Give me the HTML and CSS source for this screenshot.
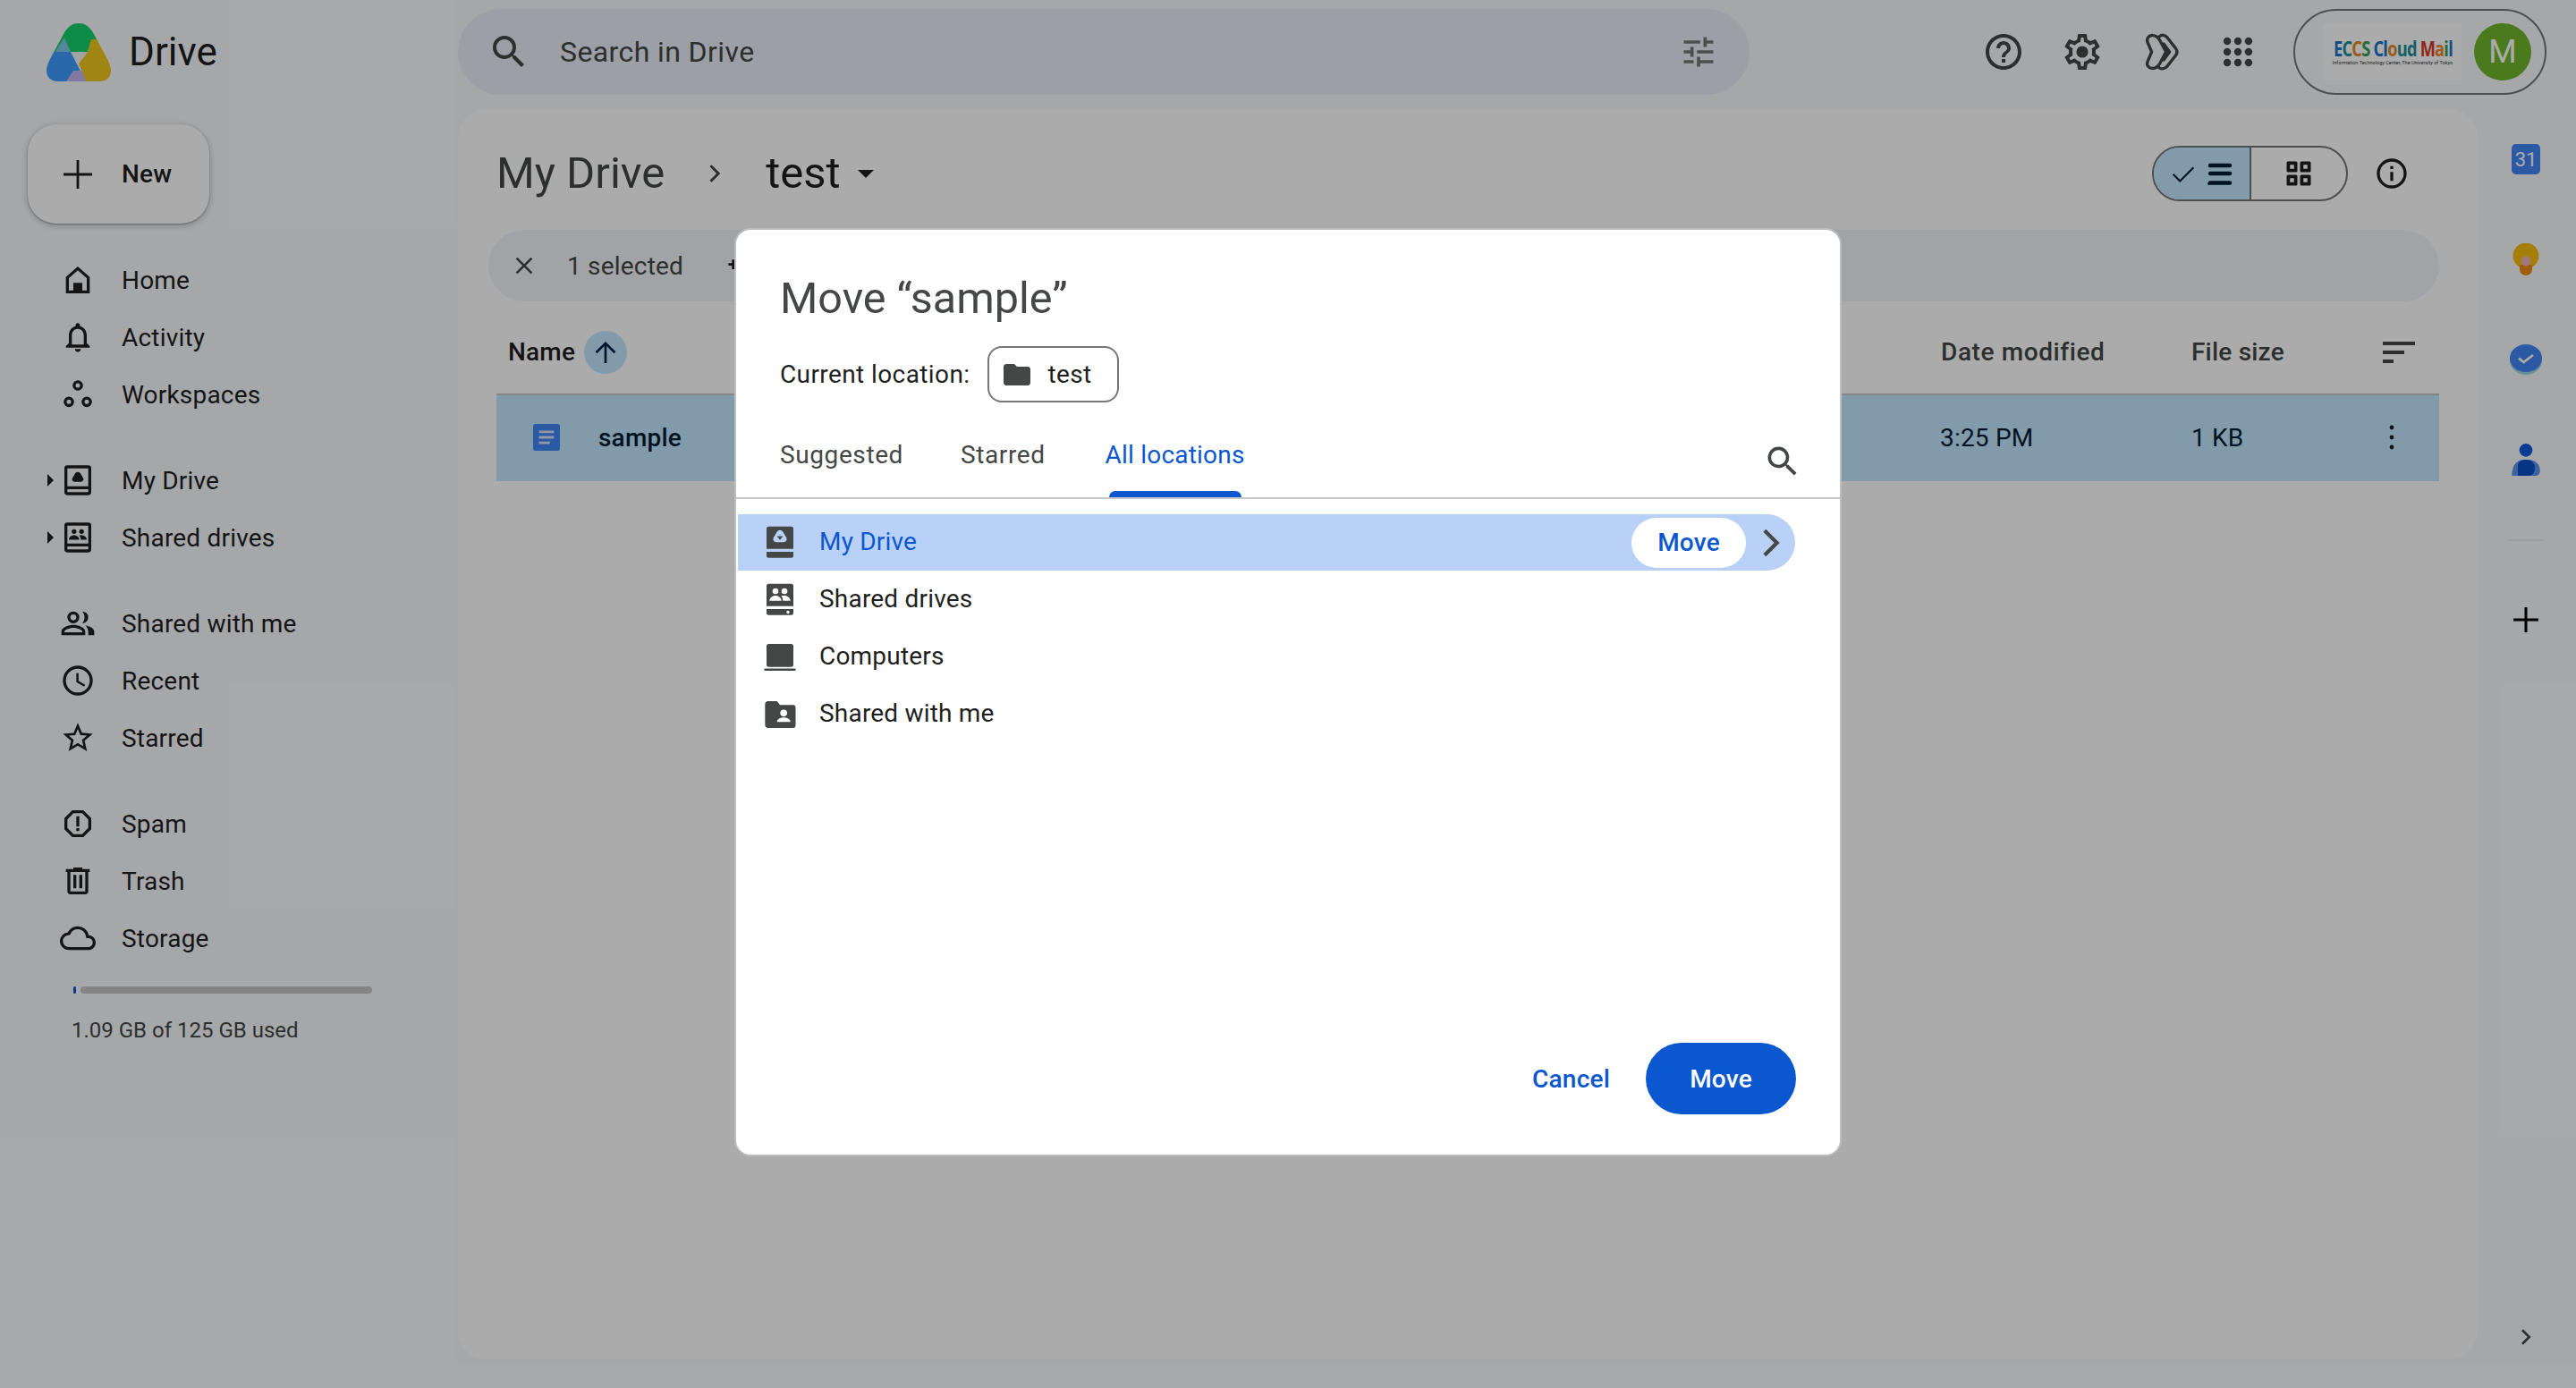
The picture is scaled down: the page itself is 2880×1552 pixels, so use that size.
FILE: index.html
```html
<!DOCTYPE html>
<html lang="en">
<head>
    <meta charset="UTF-8">
    <title>test - Google Drive</title>
    <link rel="stylesheet" href="styles.css">
</head>
<body>
    <!-- Top bar -->
    <header class="topbar">
        <div class="brand">
            <svg class="brand-logo" viewBox="0 0 72 65">
                <clipPath id="logo-clip"><path d="M36 0C46 0 51 8 54 14L68 40C71 46 72 50 72 53 72 60 67 65 60 65L12 65C5 65 0 60 0 53 0 50 1 46 4 40L18 14C21 8 26 0 36 0z"/></clipPath>
                <g clip-path="url(#logo-clip)">
                    <path fill="#16d06a" d="M0 0h72v20H50L46 32H0z"/>
                    <path fill="#80c8e8" d="M27 32H10L20 16z"/>
                    <path fill="#3c9bff" d="M0 32h27l17 33H0z"/>
                    <path fill="#eec61a" d="M50 18h22v47H44L36 45l10-13z"/>
                    <path fill="#c4b4f0" d="M22 65l8-12 10 0 4 12z"/>
                    <path fill="#f4f4f4" d="M27 32h19l-10 13z"/>
                </g>
            </svg>
            <span class="brand-name">Drive</span>
        </div>
        <div class="search">
            <svg class="search-icon" viewBox="0 0 24 24"><path d="M15.5 14h-.79l-.28-.27A6.471 6.471 0 0 0 16 9.5 6.5 6.5 0 1 0 9.5 16c1.61 0 3.09-.59 4.23-1.57l.27.28v.79l5 4.99L20.49 19l-4.99-5zm-6 0C7.01 14 5 11.99 5 9.5S7.01 5 9.5 5 14 7.01 14 9.5 11.99 14 9.5 14z"/></svg>
            <span class="search-text">Search in Drive</span>
            <svg class="search-filter" viewBox="0 0 24 24"><path d="M3 17v2h6v-2H3zM3 5v2h10V5H3zm10 16v-2h8v-2h-8v-2h-2v6h2zM7 9v2H3v2h4v2h2V9H7zm14 4v-2H11v2h10zm-6-4h2V7h4V5h-4V3h-2v6z"/></svg>
        </div>
        <div class="top-actions">
            <svg class="top-icon" viewBox="0 0 24 24"><path d="M11 18h2v-2h-2v2zm1-16C6.48 2 2 6.48 2 12s4.48 10 10 10 10-4.48 10-10S17.52 2 12 2zm0 18c-4.41 0-8-3.59-8-8s3.59-8 8-8 8 3.59 8 8-3.59 8-8 8zm0-14c-2.21 0-4 1.79-4 4h2c0-1.1.9-2 2-2s2 .9 2 2c0 2-3 1.75-3 5h2c0-2.25 3-2.5 3-5 0-2.21-1.79-4-4-4z"/></svg>
            <svg class="top-icon" viewBox="0 0 24 24"><path d="M19.43 12.98c.04-.32.07-.64.07-.98 0-.34-.03-.66-.07-.98l2.11-1.65c.19-.15.24-.42.12-.64l-2-3.46c-.09-.16-.26-.25-.44-.25-.06 0-.12.01-.17.03l-2.49 1c-.52-.4-1.08-.73-1.69-.98l-.38-2.65C14.46 2.18 14.25 2 14 2h-4c-.25 0-.46.18-.49.42l-.38 2.65c-.61.25-1.17.59-1.69.98l-2.49-1c-.06-.02-.12-.03-.18-.03-.17 0-.34.09-.43.25l-2 3.46c-.13.22-.07.49.12.64l2.11 1.65c-.04.32-.07.65-.07.98 0 .33.03.66.07.98l-2.11 1.65c-.19.15-.24.42-.12.64l2 3.46c.09.16.26.25.44.25.06 0 .12-.01.17-.03l2.49-1c.52.4 1.08.73 1.69.98l.38 2.65c.03.24.24.42.49.42h4c.25 0 .46-.18.49-.42l.38-2.65c.61-.25 1.17-.59 1.69-.98l2.49 1c.06.02.12.03.18.03.17 0 .34-.09.43-.25l2-3.46c.12-.22.07-.49-.12-.64l-2.11-1.65zm-1.98-1.71c.04.31.05.52.05.73 0 .21-.02.43-.05.73l-.14 1.13.89.7 1.08.84-.7 1.21-1.27-.51-1.04-.42-.9.68c-.43.32-.84.56-1.25.73l-1.06.43-.16 1.13-.2 1.35h-1.4l-.19-1.35-.16-1.13-1.06-.43c-.43-.18-.83-.41-1.23-.71l-.91-.7-1.06.43-1.27.51-.7-1.21 1.08-.84.89-.7-.14-1.13c-.03-.31-.05-.54-.05-.74s.02-.43.05-.73l.14-1.13-.89-.7-1.08-.84.7-1.21 1.27.51 1.04.42.9-.68c.43-.32.84-.56 1.25-.73l1.06-.43.16-1.13.2-1.35h1.39l.19 1.35.16 1.13 1.06.43c.43.18.83.41 1.23.71l.91.7 1.06-.43 1.27-.51.7 1.21-1.07.85-.89.7.14 1.13z"/><circle cx="12" cy="12" r="3.3"/></svg>
            <svg class="top-icon" viewBox="0 0 24 24"><path fill="none" stroke="#444746" stroke-width="1.7" stroke-linejoin="round" stroke-linecap="round" d="M11 3.500c1.800-1.500 3.400-.8 4.600.6l4.600 5.900c.9 1.200.9 2.800 0 4l-4.600 5.900c-1.300 1.500-3.300 2.100-5 .7M7.500 2.800c-2.300-.2-3.800 1.800-3 3.800l2.300 5.400-2.300 5.400c-.8 2 .7 4 3 3.800 2 0 3.100-1.500 3.900-2.800l3.400-6.400-3.400-6.400C10.600 4.300 9.500 2.800 7.500 2.800zM13.500 7.500l3.300 4.500-3.300 4.500"/></svg>
            <svg class="top-icon top-icon-sm" viewBox="0 0 24 24"><circle cx="5.500" cy="5.500" r="2.300"/><circle cx="12" cy="5.500" r="2.300"/><circle cx="18.500" cy="5.500" r="2.300"/><circle cx="5.500" cy="12" r="2.300"/><circle cx="12" cy="12" r="2.300"/><circle cx="18.500" cy="12" r="2.300"/><circle cx="5.500" cy="18.500" r="2.300"/><circle cx="12" cy="18.500" r="2.300"/><circle cx="18.500" cy="18.500" r="2.300"/></svg>
        </div>
        <div class="account">
            <div class="org-logo">
                <div class="org-name"><span class="c-blue">E</span><span class="c-teal">C</span><span class="c-orange">C</span><span class="c-green">S</span> <span class="c-blue">Cl</span><span class="c-orange">o</span><span class="c-teal">ud</span> <span class="c-red">M</span><span class="c-orange">a</span><span class="c-green">i</span><span class="c-blue">l</span></div>
                <div class="org-sub">Information Technology Center, The University of Tokyo</div>
            </div>
            <div class="avatar">M</div>
        </div>
    </header>

    <div class="content">
        <!-- Left navigation -->
        <nav class="sidebar">
            <button class="new-btn">
                <svg class="new-plus" viewBox="0 0 24 24"><path d="M20 12.700h-7.300V20h-1.400v-7.300H4v-1.400h7.300V4h1.400v7.300H20z"/></svg>
                New
            </button>
            <div class="nav-group">
                <div class="nav-item"><i></i><svg viewBox="0 0 24 24"><path d="M12 3L4 10v11h16V10zM6 19v-8.200l6-5.300 6 5.300V19h-3v-5H9v5z"/></svg>Home</div>
                <div class="nav-item"><i></i><svg viewBox="0 0 24 24"><path d="M18 16v-5c0-3-1.600-5.600-4.500-6.300V4a1.500 1.500 0 0 0-3 0v.7C7.600 5.400 6 8 6 11v5l-2 2v1h16v-1zm-2 1H8v-6c0-2.500 1.500-4.500 4-4.500s4 2 4 4.500zM12 22c1.100 0 2-.9 2-2h-4c0 1.100.9 2 2 2z"/></svg>Activity</div>
                <div class="nav-item"><i></i><svg viewBox="0 0 24 24"><path fill-rule="evenodd" d="M12 2.500a3.500 3.500 0 1 0 0 7 3.500 3.500 0 0 0 0-7zm0 2a1.500 1.500 0 1 1 0 3 1.500 1.500 0 0 1 0-3zM6 13.500a3.500 3.500 0 1 0 0 7 3.500 3.500 0 0 0 0-7zm0 2a1.500 1.500 0 1 1 0 3 1.500 1.500 0 0 1 0-3zM18 13.500a3.500 3.500 0 1 0 0 7 3.500 3.500 0 0 0 0-7zm0 2a1.500 1.500 0 1 1 0 3 1.500 1.500 0 0 1 0-3z"/></svg>Workspaces</div>
            </div>
            <div class="nav-group">
                <div class="nav-item"><i class="caret"></i><svg viewBox="0 0 24 24"><path fill-rule="evenodd" d="M5 2h14a2 2 0 0 1 2 2v16a2 2 0 0 1-2 2H5a2 2 0 0 1-2-2V4a2 2 0 0 1 2-2zm0 2v12h14V4zm0 14v2h14v-2z"/><path d="M12 6.500c1 0 1.600.6 2 1.300l1.600 2.700c.6 1.200-.1 2.500-1.500 2.500H9.900c-1.400 0-2.100-1.300-1.500-2.500L10 7.800c.4-.7 1-1.300 2-1.300z"/></svg>My Drive</div>
                <div class="nav-item"><i class="caret"></i><svg viewBox="0 0 24 24"><path fill-rule="evenodd" d="M5 2h14a2 2 0 0 1 2 2v16a2 2 0 0 1-2 2H5a2 2 0 0 1-2-2V4a2 2 0 0 1 2-2zm0 2v12h14V4zm0 14v2h14v-2z"/><circle cx="9.500" cy="8" r="1.600"/><circle cx="14.500" cy="8" r="1.600"/><path d="M6 13.500c0-2 2-3 3.500-3s3.500 1 3.500 3zM14 13.500c0-1.200-.4-2.100-1.100-2.800.5-.2 1.100-.2 1.600-.2 1.500 0 3.500 1 3.500 3z"/></svg>Shared drives</div>
            </div>
            <div class="nav-group">
                <div class="nav-item"><i></i><svg viewBox="0 0 24 24"><path fill-rule="evenodd" d="M9 4a4 4 0 1 0 0 8 4 4 0 0 0 0-8zm0 2a2 2 0 1 1 0 4 2 2 0 0 1 0-4zM9 13c-3 0-8 1.500-8 4.500V20h16v-2.500C17 14.500 12 13 9 13zm-6 5v-.500c0-1 3-2.500 6-2.500s6 1.500 6 2.500v.500z"/><path d="M15 4a4 4 0 0 1 0 8c1-1.100 1.500-2.500 1.500-4S16 5.100 15 4zM17 13.300c2.600.5 6 1.800 6 4.200V20h-4v-2.500c0-1.700-.8-3.100-2-4.200z"/></svg>Shared with me</div>
                <div class="nav-item"><i></i><svg viewBox="0 0 24 24"><path d="M12 2a10 10 0 1 0 0 20 10 10 0 0 0 0-20zm0 18a8 8 0 1 1 0-16 8 8 0 0 1 0 16zM12.500 7H11v6l5.200 3.100.8-1.200-4.500-2.700z"/></svg>Recent</div>
                <div class="nav-item"><i></i><svg viewBox="0 0 24 24"><path d="M22 9.240l-7.190-.62L12 2 9.190 8.630 2 9.240l5.460 4.730L5.820 21 12 17.270 18.180 21l-1.630-7.030L22 9.240zM12 15.400l-3.760 2.270 1-4.280-3.320-2.880 4.380-.38L12 6.100l1.710 4.040 4.380.38-3.320 2.880 1 4.280L12 15.400z"/></svg>Starred</div>
            </div>
            <div class="nav-group">
                <div class="nav-item"><i></i><svg viewBox="0 0 24 24"><path d="M15.730 3H8.270L3 8.270v7.460L8.270 21h7.460L21 15.730V8.270L15.730 3zM19 14.900L14.900 19H9.100L5 14.900V9.100L9.100 5h5.800L19 9.100v5.800zM11 7h2v7h-2zm0 8h2v2h-2z"/></svg>Spam</div>
                <div class="nav-item"><i></i><svg viewBox="0 0 24 24"><path d="M15 4V3H9v1H4v2h1v13c0 1.100.9 2 2 2h10c1.100 0 2-.9 2-2V6h1V4h-5zm2 15H7V6h10v13zM9 8h2v9H9zm4 0h2v9h-2z"/></svg>Trash</div>
                <div class="nav-item"><i></i><svg viewBox="0 0 24 24"><path d="M19.350 10.040A7.490 7.490 0 0 0 12 4C9.110 4 6.600 5.640 5.350 8.040A5.994 5.994 0 0 0 0 14c0 3.310 2.690 6 6 6h13c2.760 0 5-2.240 5-5 0-2.640-2.050-4.780-4.650-4.960zM19 18H6c-2.210 0-4-1.790-4-4 0-2.050 1.530-3.760 3.560-3.970l1.070-.11.500-.95A5.469 5.469 0 0 1 12 6c2.620 0 4.880 1.860 5.390 4.430l.30 1.500 1.530.11A2.980 2.980 0 0 1 22 15c0 1.650-1.350 3-3 3z"/></svg>Storage</div>
            </div>
            <div class="storage-bar"><span class="storage-used"></span><span class="storage-free"></span></div>
            <div class="storage-text">1.09 GB of 125 GB used</div>
        </nav>

        <!-- File list -->
        <main class="panel">
            <div class="title-row">
                <span class="crumb">My Drive</span>
                <svg class="crumb-sep" viewBox="0 0 24 24"><path d="M9.700 5.500L8.300 6.900l5.100 5.100-5.100 5.100 1.400 1.400 6.500-6.500z"/></svg>
                <span class="crumb crumb-current">test</span>
                <i class="crumb-caret"></i>
                <div class="view-toggle">
                    <span class="view-opt view-on">
                        <svg viewBox="0 0 24 24"><path d="M9.500 16.600L4.900 12l-1 1 5.600 5.600L20.100 8l-1-1z"/></svg>
                        <svg viewBox="0 0 24 24"><path d="M4 5.500a1 1 0 0 1 1-1h15a1 1 0 0 1 0 3H5a1 1 0 0 1-1-1.500zM4 12a1.500 1.500 0 0 1 1-1.500h15a1.500 1.500 0 0 1 0 3H5A1.500 1.500 0 0 1 4 12zM4 18.500a1 1 0 0 1 1-1h15a1 1 0 0 1 0 3H5a1 1 0 0 1-1-2z"/></svg>
                    </span>
                    <span class="view-opt">
                        <svg viewBox="0 0 24 24"><path fill-rule="evenodd" d="M4 3h6a1 1 0 0 1 1 1v6a1 1 0 0 1-1 1H4a1 1 0 0 1-1-1V4a1 1 0 0 1 1-1zm1.500 2.500v3h3v-3zM14 3h6a1 1 0 0 1 1 1v6a1 1 0 0 1-1 1h-6a1 1 0 0 1-1-1V4a1 1 0 0 1 1-1zm1.500 2.500v3h3v-3zM4 13h6a1 1 0 0 1 1 1v6a1 1 0 0 1-1 1H4a1 1 0 0 1-1-1v-6a1 1 0 0 1 1-1zm1.500 2.500v3h3v-3zM14 13h6a1 1 0 0 1 1 1v6a1 1 0 0 1-1 1h-6a1 1 0 0 1-1-1v-6a1 1 0 0 1 1-1zm1.500 2.500v3h3v-3z"/></svg>
                    </span>
                </div>
                <svg class="info-icon" viewBox="0 0 24 24"><path d="M11 7h2v2h-2zm0 4h2v6h-2zm1-9a10 10 0 1 0 0 20 10 10 0 0 0 0-20zm0 18a8 8 0 1 1 0-16 8 8 0 0 1 0 16z"/></svg>
            </div>

            <div class="select-bar">
                <svg class="select-close" viewBox="0 0 24 24"><path d="M19 6.400L17.600 5 12 10.600 6.400 5 5 6.400 10.600 12 5 17.600 6.400 19 12 13.400 17.600 19 19 17.600 13.400 12z"/></svg>
                <span>1 selected</span>
                <svg class="select-share" viewBox="0 0 24 24"><path d="M15 12a4 4 0 1 0 0-8 4 4 0 0 0 0 8zM6 10V7H4v3H1v2h3v3h2v-3h3v-2zm9 4c-2.700 0-8 1.300-8 4v2h16v-2c0-2.700-5.300-4-8-4z"/></svg>
            </div>

            <div class="file-head">
                <div class="col-name">Name
                    <span class="sort-badge"><svg viewBox="0 0 24 24"><path d="M12.900 20h-1.800V7.400L5.700 12.800 4.400 11.500 12 4l7.600 7.500-1.300 1.300-5.400-5.400z"/></svg></span>
                </div>
                <div class="col-date">Date modified</div>
                <div>File size</div>
                <div class="col-end"><svg class="sort-icon" viewBox="0 0 24 24"><path d="M3 6h18v2H3zm0 5h12v2H3zm0 5h6v2H3z"/></svg></div>
            </div>
            <div class="file-row">
                <div class="col-file">
                    <svg class="doc-icon" viewBox="0 0 32 32"><rect x="0" y="0" width="32" height="32" rx="3" fill="#4285f4"/><path fill="#d6e4fb" d="M7 8h18v3H7zm0 6.500h18v3H7zm0 6.500h13v3H7z"/></svg>
                    sample
                </div>
                <div>3:25 PM</div>
                <div>1 KB</div>
                <div class="col-end col-more"><svg class="more-icon" viewBox="0 0 24 24"><circle cx="12" cy="6.500" r="1.200"/><circle cx="12" cy="12" r="1.200"/><circle cx="12" cy="17.500" r="1.200"/></svg></div>
            </div>
        </main>

        <!-- Side apps -->
        <aside class="rail">
            <div class="rail-app">
                <span class="cal-icon">31</span>
            </div>
            <div class="rail-app">
                <svg class="rail-svg" viewBox="0 0 30 36"><circle cx="15" cy="14" r="14.500" fill="#f5bd0c"/><path fill="#f08a0a" d="M8 24h14v5a7 7 0 0 1-14 0z"/><circle cx="15" cy="20" r="5.500" fill="#f0b4b4"/></svg>
            </div>
            <div class="rail-app">
                <svg class="rail-svg" viewBox="0 0 36 34"><ellipse cx="18" cy="18" rx="18" ry="16" fill="#9fd4e4"/><ellipse cx="18" cy="15.500" rx="18" ry="15.500" fill="#4285f4"/><path d="M10 15.500l5.500 4.500L26 12" fill="none" stroke="#fff" stroke-width="2.800"/></svg>
            </div>
            <div class="rail-app">
                <svg class="rail-svg" viewBox="0 0 28 32"><circle cx="14" cy="6.500" r="6.500" fill="#0a5ae0"/><path d="M0 32c0-9 4-16 12-16h4c8 0 12 5 12 11 0 3-2 5-5 5z" fill="#5c92ee"/><path d="M6 32V22c0-4 4-6 8-6 6 0 9 4 9 8 0 4-2 8-6 8z" fill="#0a4fc6"/></svg>
            </div>
            <div class="rail-sep"></div>
            <svg class="rail-plus" viewBox="0 0 28 28"><path d="M12.500 0h3v12.500H28v3H15.500V28h-3V15.500H0v-3h12.500z"/></svg>
            <svg class="rail-toggle" viewBox="0 0 24 24"><path d="M9.700 5.500L8.300 6.900l5.100 5.100-5.100 5.100 1.400 1.400 6.500-6.500z"/></svg>
        </aside>
    </div>

    <div class="scrim"></div>

    <!-- Move dialog -->
    <section class="dialog">
        <h2 class="dialog-title">Move “sample”</h2>
        <div class="location">
            <span>Current location:</span>
            <span class="location-chip">
                <svg viewBox="0 0 24 24"><path d="M10 4H4c-1.100 0-2 .9-2 2v12c0 1.100.9 2 2 2h16c1.100 0 2-.9 2-2V8c0-1.100-.9-2-2-2h-8z"/></svg>
                test
            </span>
        </div>
        <div class="tabs">
            <span class="tab">Suggested</span>
            <span class="tab">Starred</span>
            <span class="tab tab-active">All locations</span>
            <svg class="tabs-search" viewBox="0 0 24 24"><path d="M15.500 14h-.79l-.28-.27A6.471 6.471 0 0 0 16 9.500 6.500 6.500 0 1 0 9.500 16c1.610 0 3.090-.59 4.230-1.570l.27.28v.79l5 4.990L20.490 19l-4.990-5zm-6 0C7.010 14 5 11.990 5 9.500S7.010 5 9.500 5 14 7.010 14 9.500 11.990 14 9.500 14z"/></svg>
        </div>
        <div class="places">
            <div class="place place-on">
                <svg viewBox="0 0 24 24"><path d="M4.500 1h15A1.500 1.500 0 0 1 21 2.500V16H3V2.500A1.500 1.500 0 0 1 4.500 1zM3 18h18v2.500a1.500 1.500 0 0 1-1.500 1.500h-15A1.500 1.500 0 0 1 3 20.500z"/><path fill="#b9d1f6" d="M12 3.500c1 0 1.700.6 2.200 1.400l2 3.300c.9 1.500-.1 3.300-1.800 3.300H9.600c-1.700 0-2.700-1.800-1.800-3.300l2-3.300c.5-.8 1.200-1.400 2.200-1.400z"/><path d="M10 7.500h4L12 10z"/></svg>
                <span>My Drive</span>
                <span class="place-move">Move</span>
                <svg class="place-next" viewBox="0 0 24 24"><path d="M8.600 2.800L6.800 4.600l7.400 7.400-7.400 7.400 1.800 1.800 9.200-9.200z"/></svg>
            </div>
            <div class="place">
                <svg viewBox="0 0 24 24"><path d="M4.500 1h15A1.500 1.500 0 0 1 21 2.500V16H3V2.500A1.500 1.500 0 0 1 4.500 1zM3 18h18v2.500a1.500 1.500 0 0 1-1.500 1.500h-15A1.500 1.500 0 0 1 3 20.500zm14.800 1.200a1 1 0 1 0 0 1.800 1 1 0 0 0 0-1.800z"/><g fill="#fff"><circle cx="9" cy="6" r="2"/><circle cx="15" cy="6" r="2"/><path d="M5 12.500c0-2 2-3.500 4-3.500s4 1.500 4 3.500zM14 12.500c0-1.300-.4-2.500-1.200-3.300.6-.2 1.500-.2 2.200-.2 2 0 4 1.500 4 3.500z"/></g></svg>
                <span>Shared drives</span>
            </div>
            <div class="place">
                <svg viewBox="0 0 24 24"><path d="M4.500 3h15A1.500 1.500 0 0 1 21 4.500V17a1.500 1.500 0 0 1-1.500 1.500h-15A1.500 1.500 0 0 1 3 17V4.500A1.500 1.500 0 0 1 4.500 3zM1.500 19.500h21V21h-21z"/></svg>
                <span>Computers</span>
            </div>
            <div class="place">
                <svg viewBox="0 0 24 24"><path d="M10 3H4C2.900 3 2 3.900 2 5v14c0 1.100.9 2 2 2h17c1.100 0 1.500-.9 1.500-2V7.500c0-1.100-.4-2-1.500-2h-9z"/><g fill="#fff"><circle cx="14.500" cy="11" r="2.300"/><path d="M10 17c0-2 2.500-3 4.500-3s4.500 1 4.500 3z"/></g></svg>
                <span>Shared with me</span>
            </div>
        </div>
        <div class="dialog-actions">
            <button class="btn-text">Cancel</button>
            <button class="btn-fill">Move</button>
        </div>
    </section>
</body>
</html>
```

FILE: styles.css
```css
* {
    box-sizing: border-box;
}

html, body {
    height: 100%;
}

body {
    margin: 0;
    height: 1552px;
    overflow: hidden;
    position: relative;
    display: flex;
    flex-direction: column;
    background-color: #f8fafd;
    font-family: Roboto, "Noto Sans", Arial, sans-serif;
    font-size: 28px;
    letter-spacing: 0.2px;
    color: #1f1f1f;
}

svg {
    fill: currentColor;
    flex: none;
}

/* Top bar */
.topbar {
    height: 122px;
    flex: none;
    display: flex;
    align-items: flex-start;
    padding-top: 10px;
}

.brand {
    width: 512px;
    display: flex;
    align-items: center;
    height: 96px;
    padding-left: 52px;
    gap: 20px;
}

.brand-logo {
    width: 72px;
    height: 65px;
}

.brand-name {
    font-size: 44px;
    letter-spacing: 0;
    color: #1f1f1f;
}

.search {
    width: 1444px;
    height: 96px;
    border-radius: 48px;
    background-color: #e9eef6;
    display: flex;
    align-items: center;
    padding-left: 33px;
    padding-right: 35px;
    color: #444746;
}

.search-icon {
    width: 48px;
    height: 48px;
    margin-right: 33px;
}

.search-text {
    flex: 1;
    font-size: 32px;
    letter-spacing: 0.4px;
}

.search-filter {
    width: 44px;
    height: 44px;
    color: #747775;
}

.top-actions {
    display: flex;
    align-items: center;
    height: 96px;
    margin-left: 260px;
    gap: 40px;
    color: #444746;
}

.top-icon {
    width: 48px;
    height: 48px;
}

.top-icon-sm {
    width: 44px;
    height: 44px;
}

.account {
    margin-left: 40px;
    width: 283px;
    height: 96px;
    border: 2px solid #747775;
    border-radius: 48px;
    display: flex;
    align-items: center;
    padding-left: 32px;
}

.org-logo {
    width: 154px;
    height: 63px;
    background-color: #fff;
    display: flex;
    flex-direction: column;
    align-items: center;
    justify-content: center;
    line-height: 1;
}

.org-name {
    font-family: "Open Sans", sans-serif;
    font-weight: 700;
    font-size: 24px;
    letter-spacing: -1px;
    white-space: nowrap;
    transform: scaleX(0.76);
}

.org-sub {
    font-size: 5.500px;
    letter-spacing: 0;
    margin-top: 2px;
    color: #333;
    white-space: nowrap;
}

.c-blue { color: #1a73c8; }
.c-teal { color: #1a8f9c; }
.c-orange { color: #e8882a; }
.c-green { color: #3aa050; }
.c-red { color: #d63a2a; }

.avatar {
    width: 64px;
    height: 64px;
    margin-left: 14px;
    border-radius: 50%;
    background-color: #6fb62c;
    color: #fff;
    display: flex;
    align-items: center;
    justify-content: center;
    font-size: 36px;
}

.content {
    flex: 1;
    display: flex;
    min-height: 0;
}

/* Left navigation */
.sidebar {
    width: 512px;
    flex: none;
    padding-top: 17px;
}

.new-btn {
    width: 203px;
    height: 111px;
    margin-left: 31px;
    margin-bottom: 32px;
    border: none;
    border-radius: 32px;
    background-color: #fff;
    box-shadow: 0 2px 6px 2px rgba(0, 0, 0, 0.15), 0 1px 2px rgba(0, 0, 0, 0.3);
    display: flex;
    align-items: center;
    padding: 0 0 0 32px;
    gap: 25px;
    font-family: inherit;
    font-size: 28px;
    font-weight: 500;
    letter-spacing: 0.2px;
    color: #1f1f1f;
}

.new-plus {
    width: 48px;
    height: 48px;
}

.nav-group {
    margin-bottom: 32px;
}

.nav-item {
    height: 64px;
    display: grid;
    grid-template-columns: 25px 69px 1fr;
    align-items: center;
    padding-left: 42px;
    padding-bottom: 2px;
    color: #1f1f1f;
}

.nav-item svg {
    width: 40px;
    height: 40px;
    color: #1f1f1f;
}

.caret {
    width: 0;
    height: 0;
    margin-left: 11px;
    border-left: 7px solid #1f1f1f;
    border-top: 7px solid transparent;
    border-bottom: 7px solid transparent;
}

.storage-bar {
    display: flex;
    gap: 5px;
    margin-left: 82px;
    width: 334px;
    height: 8px;
    margin-top: -11px;
}

.storage-used {
    width: 3px;
    background-color: #0b57d0;
    border-radius: 2px;
}

.storage-free {
    flex: 1;
    background-color: #c7c7c7;
    border-radius: 4px;
}

.storage-text {
    margin-top: 25px;
    margin-left: 80px;
    font-size: 24px;
    line-height: 32px;
    letter-spacing: 0;
    color: #444746;
}

/* File list panel */
.panel {
    width: 2258px;
    flex: none;
    height: 1398px;
    background-color: #fff;
    border-radius: 32px;
    padding-left: 43px;
    padding-right: 43px;
}

.title-row {
    height: 135px;
    padding-top: 8px;
    display: flex;
    align-items: center;
    padding-right: 33px;
}

.crumb {
    font-size: 49px;
    letter-spacing: 0;
    color: #444746;
}

.crumb-current {
    color: #1f1f1f;
}

.crumb-sep {
    width: 36px;
    height: 36px;
    margin: 0 39px 0 38px;
    color: #444746;
}

.crumb-caret {
    margin-left: 19px;
    margin-top: 2px;
    border-top: 9px solid #1f1f1f;
    border-left: 9px solid transparent;
    border-right: 9px solid transparent;
}

.view-toggle {
    margin-left: auto;
    width: 219px;
    height: 62px;
    border: 2px solid #747775;
    border-radius: 31px;
    display: flex;
    overflow: hidden;
}

.view-opt {
    flex: 1;
    display: flex;
    align-items: center;
    justify-content: center;
    gap: 4px;
}

.view-opt svg {
    width: 36px;
    height: 36px;
    color: #1f1f1f;
}

.view-on {
    background-color: #c2e7ff;
    border-right: 2px solid #747775;
    color: #001d35;
}

.view-on svg {
    color: #001d35;
}

.info-icon {
    width: 40px;
    height: 40px;
    margin-left: 29px;
}

.select-bar {
    margin-left: -9px;
    height: 80px;
    border-radius: 40px;
    background-color: #f0f4f9;
    display: flex;
    align-items: center;
    padding-left: 24px;
    color: #1f1f1f;
}

.select-close {
    width: 32px;
    height: 32px;
    margin-right: 32px;
    color: #444746;
}

.select-bar span {
    color: #444746;
}

.select-share {
    width: 32px;
    height: 32px;
    margin-left: 49px;
}

.file-head,
.file-row {
    display: grid;
    grid-template-columns: 1614px 281px 1fr 120px;
    align-items: center;
}

.file-head {
    height: 103px;
    padding-top: 10px;
    color: #444746;
    font-weight: 500;
}

.col-date {
    letter-spacing: 0.6px;
    padding-left: 1px;
}

.col-name {
    padding-left: 13px;
    display: flex;
    align-items: center;
    gap: 10px;
    color: #1f1f1f;
}

.sort-badge {
    width: 48px;
    height: 48px;
    border-radius: 50%;
    background-color: #c2e7ff;
    display: flex;
    align-items: center;
    justify-content: center;
    color: #041e49;
}

.sort-badge svg {
    width: 36px;
    height: 36px;
}

.col-end {
    display: flex;
    justify-content: flex-end;
    padding-right: 21px;
}

.sort-icon {
    width: 48px;
    height: 48px;
    color: #444746;
}

.file-row {
    height: 98px;
    background-color: #c2e7ff;
    border-top: 2px solid #c7c7c7;
    padding-bottom: 2px;
    color: #001d35;
}

.col-file {
    display: flex;
    align-items: center;
    gap: 43px;
    padding-left: 41px;
    font-weight: 500;
}

.doc-icon {
    width: 30px;
    height: 32px;
}

.col-more {
    padding-right: 29px;
}

.more-icon {
    width: 48px;
    height: 48px;
    color: #1f1f1f;
}

/* Side apps */
.rail {
    flex: 1;
    display: flex;
    flex-direction: column;
    align-items: center;
    padding-right: 2px;
}

.rail-app {
    height: 112px;
    flex: none;
    display: flex;
    align-items: center;
    justify-content: center;
}

.cal-icon {
    width: 32px;
    height: 34px;
    border-radius: 5px;
    background-color: #4285f4;
    color: #fff;
    display: flex;
    align-items: center;
    justify-content: center;
    font-size: 22px;
    letter-spacing: 0;
}

.rail-svg {
    width: 36px;
    height: 36px;
}

.rail-sep {
    width: 40px;
    height: 2px;
    margin-top: 33px;
    background-color: #eaeaea;
}

.rail-plus {
    width: 28px;
    height: 28px;
    margin-top: 74px;
    color: #000;
}

.rail-toggle {
    width: 32px;
    height: 32px;
    margin-top: auto;
    margin-bottom: 41px;
    color: #444746;
}

/* Dialog */
.scrim {
    position: absolute;
    inset: 0;
    background-color: rgba(0, 0, 0, 0.33);
}

.dialog {
    position: absolute;
    left: 823px;
    top: 257px;
    width: 1234px;
    height: 1034px;
    background-color: #fff;
    border-radius: 16px;
    box-shadow: 0 0 0 2px #bdbdbd;
    display: flex;
    flex-direction: column;
}

.dialog-title {
    margin: 49px 0 0 49px;
    font-size: 48.500px;
    font-weight: 400;
    line-height: 56px;
    letter-spacing: 0;
    color: #444746;
}

.location {
    margin: 25px 0 0 49px;
    height: 63px;
    display: flex;
    align-items: center;
    gap: 20px;
    letter-spacing: 0.4px;
    color: #1f1f1f;
}

.location-chip {
    width: 147px;
    height: 63px;
    border: 2px solid #747775;
    border-radius: 16px;
    display: flex;
    align-items: center;
    padding-left: 13px;
    gap: 16px;
}

.location-chip svg {
    width: 36px;
    height: 36px;
    color: #444746;
}

.tabs {
    margin-top: 18px;
    height: 90px;
    border-bottom: 2px solid #c7c7c7;
    padding-left: 49px;
    padding-right: 42px;
    display: flex;
    gap: 64px;
}

.tab {
    position: relative;
    line-height: 82px;
    letter-spacing: 0.6px;
    color: #444746;
}

.tab-active {
    margin-left: 3px;
    letter-spacing: 0.2px;
    color: #0b57d0;
}

.tab-active::after {
    content: "";
    position: absolute;
    left: 4px;
    right: 4px;
    bottom: 0;
    height: 7px;
    border-radius: 7px 7px 0 0;
    background-color: #0b57d0;
}

.tabs-search {
    margin-left: auto;
    margin-top: 26px;
    width: 44px;
    height: 44px;
    color: #444746;
}

.places {
    margin-top: 17px;
    margin-left: 2px;
}

.place {
    height: 64px;
    width: 1182px;
    display: flex;
    align-items: center;
    padding-left: 27px;
    gap: 24px;
    color: #1f1f1f;
}

.place > span:first-of-type {
    padding-bottom: 3px;
}

.place svg {
    width: 40px;
    height: 40px;
    color: #444746;
}

.place-on {
    height: 63px;
    margin-bottom: 1px;
    background-color: #b9d1f6;
    border-radius: 0 32px 32px 0;
    color: #0b57d0;
    padding-right: 7px;
}

.place-move {
    margin-left: auto;
    width: 128px;
    height: 56px;
    border-radius: 28px;
    background-color: #fff;
    font-weight: 500;
    display: flex;
    align-items: center;
    justify-content: center;
}

.place svg.place-next {
    margin-left: -16px;
}

.dialog-actions {
    margin-top: auto;
    padding: 0 49px 45px 0;
    display: flex;
    justify-content: flex-end;
    align-items: center;
    gap: 40px;
}

.btn-text,
.btn-fill {
    border: none;
    padding: 0;
    background: none;
    font-family: inherit;
    font-size: 28px;
    font-weight: 500;
    letter-spacing: 0.2px;
    color: #0b57d0;
}

.btn-fill {
    width: 168px;
    height: 80px;
    border-radius: 40px;
    background-color: #0b57d0;
    color: #fff;
}
```
